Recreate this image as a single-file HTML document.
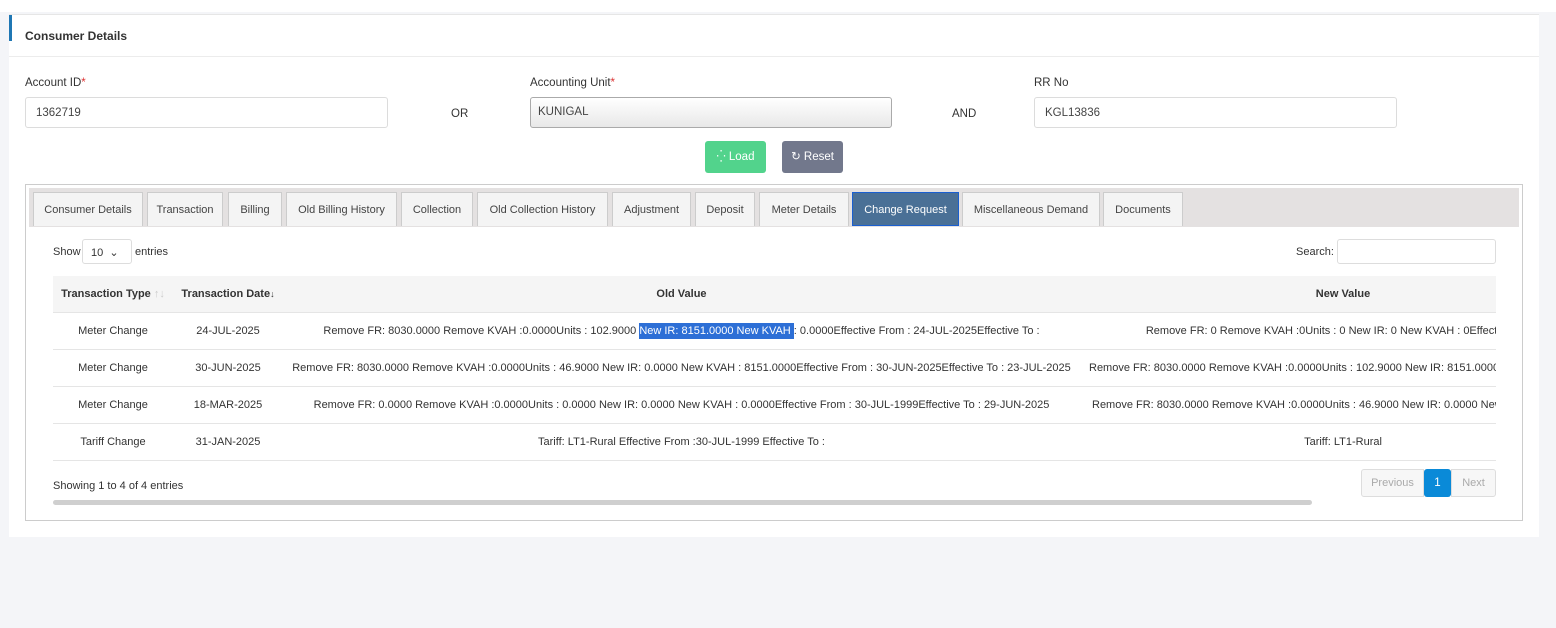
<!DOCTYPE html>
<html><head><style>
*{box-sizing:border-box;margin:0;padding:0}
body{width:1556px;height:628px;background:#f4f5f8;font-family:"Liberation Sans",sans-serif;font-size:11.5px;color:#333;position:relative;overflow:hidden}
.a{position:absolute}
.card{left:9px;top:14px;width:1530px;height:523px;background:#fff;border-top:1px solid #e6e6e6}
.inp{background:#fff;border:1px solid #dcdcdc;border-radius:3px;height:31px;padding:9px 10px;color:#444}
.tab{top:192px;height:34px;background:#f4f4f4;border:1px solid #ccc;border-bottom:none;text-align:center;line-height:35px;color:#444;font-size:11px}
td,th{white-space:nowrap;text-align:center;height:37px;border-bottom:1px solid #e5e5e5;overflow:hidden;padding:1px 0 0 0;font-size:11px}
th{background:#f5f5f5;font-weight:bold;color:#333;height:36px}
</style></head><body>
<div class="a" style="left:0;top:0;width:1556px;height:12px;background:#fff"></div>
<div class="a card"></div>
<div class="a" style="left:9px;top:15px;width:3px;height:26px;background:#1f77b4"></div>
<div class="a" style="left:25px;top:29px;font-weight:bold;font-size:12px;color:#333">Consumer Details</div>
<div class="a" style="left:9px;top:56px;width:1530px;height:1px;background:#ececec"></div>

<div class="a" style="left:25px;top:77px">Account ID<span style="color:#d33">*</span></div>
<div class="a inp" style="left:25px;top:97px;width:363px">1362719</div>
<div class="a" style="left:451px;top:108px">OR</div>
<div class="a" style="left:530px;top:77px">Accounting Unit<span style="color:#d33">*</span></div>
<div class="a inp" style="left:530px;top:97px;width:362px;background:linear-gradient(#fff,#e8e8e8);border-color:#aaa;padding:8px 7px">KUNIGAL</div>
<div class="a" style="left:952px;top:108px">AND</div>
<div class="a" style="left:1034px;top:77px">RR No</div>
<div class="a inp" style="left:1034px;top:97px;width:363px">KGL13836</div>

<div class="a" style="left:705px;top:141px;width:61px;height:32px;background:#52d38c;border-radius:3px;color:#fff;line-height:33px;text-align:center">⁛ Load</div>
<div class="a" style="left:782px;top:141px;width:61px;height:32px;background:#72788c;border-radius:3px;color:#fff;line-height:33px;text-align:center">↻ Reset</div>

<div class="a" style="left:25px;top:184px;width:1498px;height:337px;border:1px solid #ccc"></div>
<div class="a" style="left:29px;top:188px;width:1490px;height:39px;background:#e4e1e1"></div>
<div class="a tab" style="left:33px;width:110px">Consumer Details</div>
<div class="a tab" style="left:147px;width:76px">Transaction</div>
<div class="a tab" style="left:228px;width:54px">Billing</div>
<div class="a tab" style="left:286px;width:111px">Old Billing History</div>
<div class="a tab" style="left:401px;width:72px">Collection</div>
<div class="a tab" style="left:477px;width:131px">Old Collection History</div>
<div class="a tab" style="left:612px;width:79px">Adjustment</div>
<div class="a tab" style="left:695px;width:60px">Deposit</div>
<div class="a tab" style="left:759px;width:90px">Meter Details</div>
<div class="a tab" style="left:852px;width:107px;background:#4a7096;color:#fff;border:1px solid #1a5fd0">Change Request</div>
<div class="a tab" style="left:962px;width:138px">Miscellaneous Demand</div>
<div class="a tab" style="left:1103px;width:80px">Documents</div>

<div class="a" style="left:53px;top:246px;font-size:11px">Show</div>
<div class="a" style="left:82px;top:239px;width:50px;height:25px;border:1px solid #ddd;border-radius:3px;padding:6px 8px;font-size:11px">10 &nbsp;⌄</div>
<div class="a" style="left:135px;top:246px;font-size:11px">entries</div>
<div class="a" style="left:1296px;top:246px;font-size:11px">Search:</div>
<div class="a" style="left:1337px;top:239px;width:159px;height:25px;border:1px solid #ddd;border-radius:3px"></div>

<div class="a" style="left:53px;top:276px;width:1443px;height:186px;overflow:hidden">
<table style="border-collapse:collapse;table-layout:fixed;width:1553px">
<colgroup><col style="width:120px"><col style="width:110px"><col style="width:797px"><col style="width:526px"></colgroup>
<tr><th>Transaction Type <span style="color:#ccc;font-weight:normal">↑↓</span></th><th>Transaction Date<span style="font-size:9px">↓</span></th><th>Old Value</th><th>New Value</th></tr>
<tr><td>Meter Change</td><td>24-JUL-2025</td><td>Remove FR: 8030.0000 Remove KVAH :0.0000Units : 102.9000 <span style="background:#2d6fd6;color:#fff;padding:2px 0">New IR: 8151.0000 New KVAH </span>: 0.0000Effective From : 24-JUL-2025Effective To :</td><td>Remove FR: 0 Remove KVAH :0Units : 0 New IR: 0 New KVAH : 0Effective From</td></tr>
<tr><td>Meter Change</td><td>30-JUN-2025</td><td>Remove FR: 8030.0000 Remove KVAH :0.0000Units : 46.9000 New IR: 0.0000 New KVAH : 8151.0000Effective From : 30-JUN-2025Effective To : 23-JUL-2025</td><td style="text-align:left;padding-left:9px">Remove FR: 8030.0000 Remove KVAH :0.0000Units : 102.9000 New IR: 8151.0000 New</td></tr>
<tr><td>Meter Change</td><td>18-MAR-2025</td><td>Remove FR: 0.0000 Remove KVAH :0.0000Units : 0.0000 New IR: 0.0000 New KVAH : 0.0000Effective From : 30-JUL-1999Effective To : 29-JUN-2025</td><td style="text-align:left;padding-left:12px">Remove FR: 8030.0000 Remove KVAH :0.0000Units : 46.9000 New IR: 0.0000 New KVAH</td></tr>
<tr><td>Tariff Change</td><td>31-JAN-2025</td><td>Tariff: LT1-Rural Effective From :30-JUL-1999 Effective To :</td><td>Tariff: LT1-Rural</td></tr>
</table></div>

<div class="a" style="left:53px;top:480px;font-size:11px">Showing 1 to 4 of 4 entries</div>
<div class="a" style="left:53px;top:500px;width:1259px;height:5px;background:#cfcfcf;border-radius:3px"></div>
<div class="a" style="left:1361px;top:469px;width:63px;height:28px;border:1px solid #ddd;background:#f7f7f7;color:#aaa;text-align:center;line-height:27px;border-radius:3px 0 0 3px;font-size:11px">Previous</div>
<div class="a" style="left:1424px;top:469px;width:27px;height:28px;background:#0a8ad8;color:#fff;text-align:center;line-height:28px;border-radius:3px">1</div>
<div class="a" style="left:1451px;top:469px;width:45px;height:28px;border:1px solid #ddd;background:#f7f7f7;color:#aaa;text-align:center;line-height:27px;border-radius:0 3px 3px 0;font-size:11px">Next</div>
</body></html>
